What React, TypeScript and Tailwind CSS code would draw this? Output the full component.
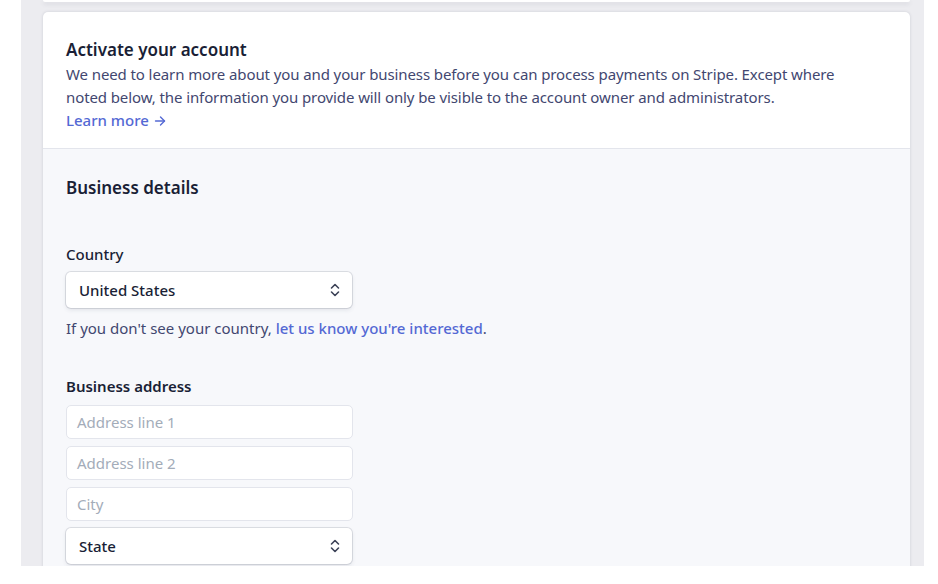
import React from "react";

function Chevrons() {
  return (
    <svg width="12" height="16" viewBox="0 0 12 16" fill="none" stroke="#3c4257" strokeWidth="1.6" strokeLinecap="round" strokeLinejoin="round">
      <path d="M2.5 6 L6 2.5 L9.5 6" />
      <path d="M2.5 10 L6 13.5 L9.5 10" />
    </svg>
  );
}

function ArrowRight() {
  return (
    <svg width="12" height="12" viewBox="0 0 12 12" fill="none" stroke="#5469d4" strokeWidth="1.4" strokeLinecap="round" strokeLinejoin="round">
      <path d="M1.5 6 H10.5" />
      <path d="M6.5 2 L10.5 6 L6.5 10" />
    </svg>
  );
}

function SelectBox({ value }: { value: string }) {
  return (
    <div className="flex items-center justify-between w-[286px] h-[36px] bg-white rounded-[5px] pl-[13px] pr-[11px] shadow-[0_0_0_1px_rgba(60,66,87,0.14),0_2px_4px_rgba(60,66,87,0.12)]">
      <span className="text-[15px] font-medium text-[#1a1f36]">{value}</span>
      <Chevrons />
    </div>
  );
}

function TextField({ placeholder }: { placeholder: string }) {
  return (
    <div className="flex items-center w-[287px] h-[34px] bg-white rounded-[5px] px-[10px] border border-[#e3e5ec]">
      <span className="text-[15px] text-[#a3acb9]">{placeholder}</span>
    </div>
  );
}

export default function App() {
  return (
    <div className="w-[938px] h-[584px] bg-white overflow-hidden" style={{ fontFamily: '"Noto Sans", "Open Sans", sans-serif' }}>
      <div className="ml-[21px] w-[903px] h-[566px] bg-[#ececf0] overflow-hidden pl-[22px] pr-[14px]">
        {/* previous card, mostly scrolled away */}
        <div className="h-[2px] bg-white rounded-b-[4px] shadow-[0_2px_4px_rgba(60,66,87,0.15)]" />

        {/* main card */}
        <div className="mt-[10px] bg-white rounded-t-[5px] shadow-[0_0_3px_rgba(60,66,87,0.18)] h-[600px] flex flex-col">
          <div className="px-[23px] pt-[26px] pb-[16px] border-b border-[#e3e5ec]">
            <h2 className="text-[17px] font-semibold text-[#1a1f36] leading-[24px]">Activate your account</h2>
            <p className="max-w-[800px] text-[15px] text-[#424770] leading-[23px] mt-[1px] tracking-[-0.1px]">
              We need to learn more about you and your business before you can process payments on Stripe. Except where noted below, the information you provide will only be visible to the account owner and administrators.
            </p>
            <a className="text-[15px] font-medium text-[#5469d4] leading-[23px] flex items-center gap-[5px]">
              Learn more <ArrowRight />
            </a>
          </div>

          <div className="flex-1 bg-[#f7f8fb] px-[23px] pt-[27px]">
            <h3 className="text-[17px] font-semibold text-[#1a1f36] leading-[24px]">Business details</h3>

            <div className="mt-[43px]">
              <div className="text-[15px] font-medium text-[#1a1f36] leading-[22px]">Country</div>
              <div className="mt-[7px]">
                <SelectBox value="United States" />
              </div>
              <p className="mt-[9px] text-[15px] text-[#424770] leading-[22px]">
                If you don't see your country, <a className="text-[#5469d4] font-medium">let us know you're interested</a>.
              </p>
            </div>

            <div className="mt-[36px]">
              <div className="text-[15px] font-semibold text-[#1a1f36] leading-[22px]">Business address</div>
              <div className="mt-[8px] flex flex-col gap-[7px]">
                <TextField placeholder="Address line 1" />
                <TextField placeholder="Address line 2" />
                <TextField placeholder="City" />
                <SelectBox value="State" />
              </div>
            </div>
          </div>
        </div>
      </div>
    </div>
  );
}
